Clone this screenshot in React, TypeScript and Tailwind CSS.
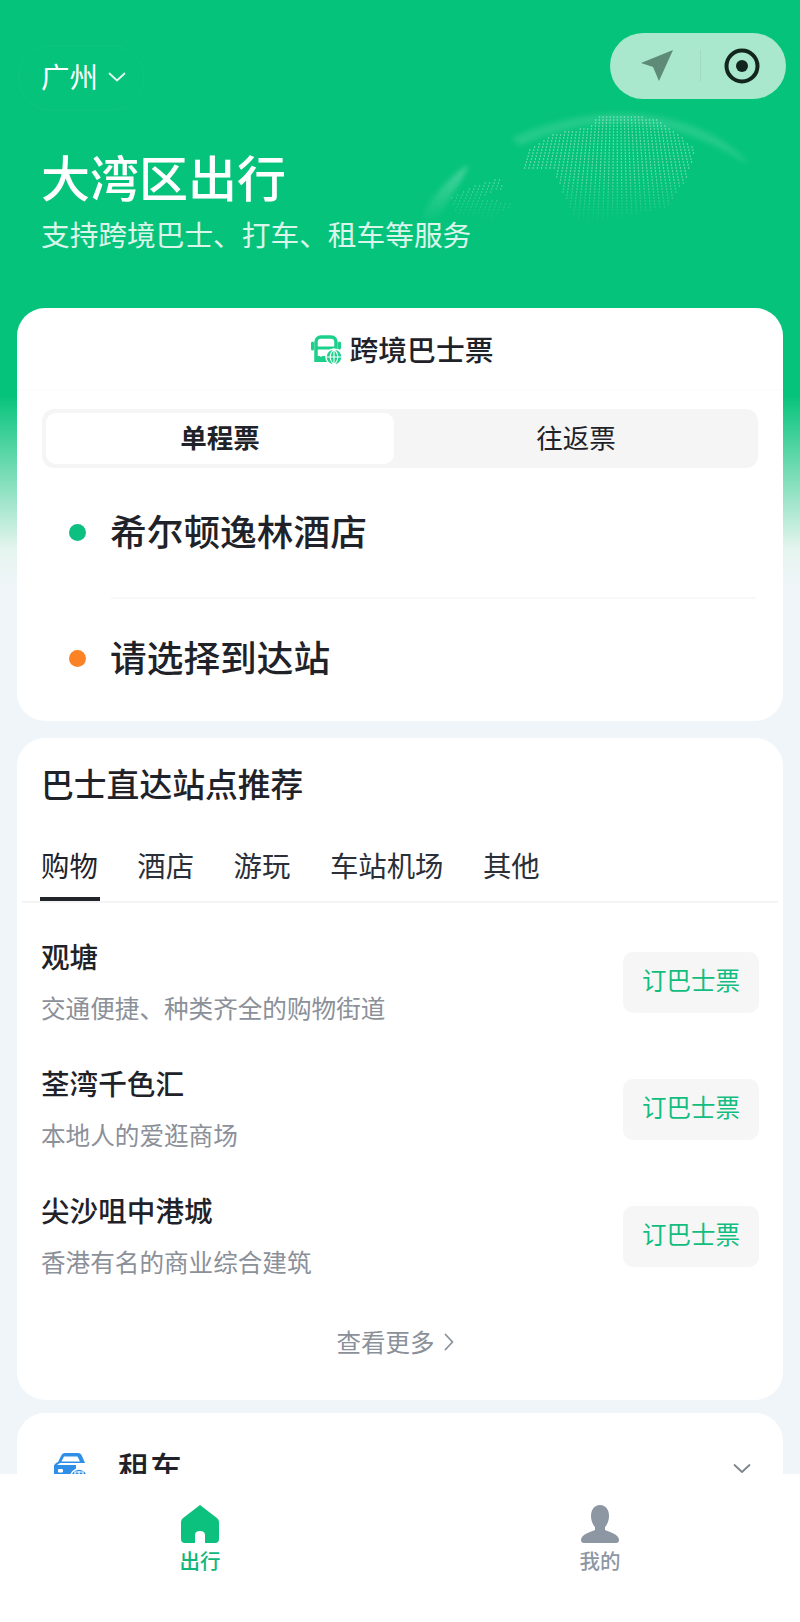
import React from "react";

const FONT = "font-['Noto_Sans_CJK_SC','Noto_Sans',sans-serif]";

type P = [number, number];
const LAND: P[][] = [
  [[380, 180], [450, 130], [560, 110], [600, 70], [760, 80], [885, 170], [860, 260], [800, 350], [620, 385], [525, 385], [480, 290], [460, 240], [360, 230]],
  [[150, 320], [200, 292], [300, 262], [312, 290], [240, 320], [340, 340], [260, 392], [170, 370]],
];

function inside(x: number, y: number, poly: P[]) {
  let c = false;
  for (let i = 0, j = poly.length - 1; i < poly.length; j = i++) {
    const [xi, yi] = poly[i];
    const [xj, yj] = poly[j];
    if (yi > y !== yj > y && x < ((xj - xi) * (y - yi)) / (yj - yi) + xi) c = !c;
  }
  return c;
}

function Globe() {
  const dots: { x: number; y: number; o: number }[] = [];
  for (let k = -60; k <= 30; k++) {
    for (let y = 60; y <= 400; y += 9) {
      const x = 650 + k * 13 * (0.8 + ((y - 60) / 300) * 0.3);
      if (!LAND.some((p) => inside(x, y, p))) continue;
      const o = y < 240 ? 0.36 : Math.max(0.05, 0.36 * (1 - (y - 240) / 160));
      dots.push({ x: 400 + x / 3, y: 90 + y / 3, o });
    }
  }
  return (
    <svg className="absolute left-[400px] top-[90px]" width="400" height="200" viewBox="400 90 400 200">
      <defs>
        <linearGradient id="rim" x1="0" y1="0" x2="0" y2="1">
          <stop offset="0" stopColor="#fff" stopOpacity="0.28" />
          <stop offset="1" stopColor="#fff" stopOpacity="0" />
        </linearGradient>
        <filter id="soft" x="-20%" y="-20%" width="140%" height="140%">
          <feGaussianBlur stdDeviation="2.500" />
        </filter>
      </defs>
      <path d="M468 165 C448 178 428 200 420 222 C428 226 436 222 444 208 C452 192 464 180 468 165 Z" fill="url(#rim)" filter="url(#soft)" />
      <path d="M512 138 C550 120 590 114 620 113 C680 114 725 135 750 165 C720 148 690 130 640 124 C600 120 560 128 520 146 Z" fill="#fff" fillOpacity="0.12" filter="url(#soft)" />
      {dots.map((d, i) => (
        <rect key={i} x={d.x} y={d.y} width="1.200" height="2" fill="#fff" fillOpacity={d.o} />
      ))}
    </svg>
  );
}

function Chevron({ className = "" }: { className?: string }) {
  return (
    <svg className={className} viewBox="0 0 18 10" fill="none" stroke="currentColor" strokeWidth="1.800" strokeLinecap="round" strokeLinejoin="round">
      <path d="M1.500 1.500 9 8.500l7.500-7" />
    </svg>
  );
}

function BusIcon() {
  return (
    <svg width="32" height="30" viewBox="0 0 32 30" fill="none">
      <path d="M5 27V7c0-3 2-5 5-5h10c3 0 5 2 5 5v7" stroke="#1ccf8a" strokeWidth="3.500" />
      <path d="M1.500 8v6M28.500 8v5" stroke="#1ccf8a" strokeWidth="3" strokeLinecap="round" />
      <path d="M5 13h20" stroke="#1ccf8a" strokeWidth="3" />
      <path d="M5 24h11" stroke="#1ccf8a" strokeWidth="6" />
      <circle cx="10" cy="20" r="1.800" fill="#fff" />
      <circle cx="23" cy="22" r="8" fill="#1ccf8a" stroke="#fff" strokeWidth="1.500" />
      <path d="M15.500 22h15M23 14.500v15M23 14.500c-5 4-5 11 0 15M23 14.500c5 4 5 11 0 15" stroke="#fff" strokeWidth="1.100" />
    </svg>
  );
}

function CarIcon() {
  return (
    <svg width="36" height="26" viewBox="0 0 36 26" fill="none">
      <path d="M1 14c0-3 2-4 4-5l3-6c1-2 2-3 4-3h13c2 0 3 1 4 3l3 7H7" fill="#2f8fe6" />
      <path d="M11 3.500h13.500l2.500 5H8.500z" fill="#fff" />
      <path d="M1 12h22v14H3c-1 0-2-1-2-2z" fill="#2f8fe6" />
      <rect x="5" y="16" width="5" height="3.500" rx="1" fill="#fff" />
      <path d="M17 26c0-6 4-10 9-10s9 4 9 10z" fill="#2f8fe6" stroke="#fff" strokeWidth="1.500" />
      <path d="M22 19h8v5h-8zM26 18v7" stroke="#fff" strokeWidth="1.200" />
    </svg>
  );
}

const tabs = ["购物", "酒店", "游玩", "车站机场", "其他"];
const items = [
  { t: "观塘", s: "交通便捷、种类齐全的购物街道" },
  { t: "荃湾千色汇", s: "本地人的爱逛商场" },
  { t: "尖沙咀中港城", s: "香港有名的商业综合建筑" },
];

export default function App() {
  return (
    <div className={`${FONT} relative h-[1622px] w-[800px] overflow-hidden bg-[linear-gradient(180deg,#05c37b_0,#05c37b_395px,#e6f5ef_550px,#f0f5f9_590px,#f0f5f9_100%)] text-[#1f2329]`}>
      <Globe />

      {/* Header */}
      <header className="relative h-[308px] px-[41px] text-white">
        <div className="absolute left-[18px] top-[45px] h-[66px] w-[126px] rounded-[33px] border border-white/[0.03]" />
        <div className="flex h-[152px] items-center gap-[10px]">
          <span className="text-[28.500px] leading-none">广州</span>
          <Chevron className="mt-[2px] h-[10px] w-[18px] text-white/90" />
        </div>
        <h1 className="mt-[-4px] text-[49px] font-medium leading-[56px]">大湾区出行</h1>
        <p className="mt-[10px] whitespace-nowrap text-[28.700px] leading-[40px] text-white/85">支持跨境巴士、打车、租车等服务</p>

        <div className="absolute left-[610px] top-[33px] flex h-[66px] w-[176px] items-center rounded-[33px] bg-[#a9e8cd]">
          <div className="flex w-[90px] justify-center pl-[4px]">
            <svg width="32" height="32" viewBox="0 0 32 32">
              <path d="M32 0 0 13l12 4 6 14z" fill="#5e8a78" />
            </svg>
          </div>
          <div className="h-[32px] w-px bg-black/[0.06]" />
          <div className="flex flex-1 justify-center pr-[4px]">
            <svg width="36" height="36" viewBox="0 0 36 36" fill="none">
              <circle cx="18" cy="18" r="15.500" stroke="#12261e" strokeWidth="4" />
              <circle cx="18" cy="18" r="6" fill="#12261e" />
            </svg>
          </div>
        </div>
      </header>

      {/* Main */}
      <main className="relative flex flex-col gap-[17px] px-[17px]">
        {/* Ticket card */}
        <section className="h-[413px] rounded-[28px] bg-white">
          <div className="flex h-[82px] items-center justify-center gap-[7px] border-b border-[#fbfbfb] pl-[4px] pt-[2px]">
            <BusIcon />
            <span className="text-[28.800px] font-medium leading-none">跨境巴士票</span>
          </div>
          <div className="mx-[25px] mt-[19px] flex h-[59px] rounded-[12px] bg-[#f5f5f5] p-[4px] pr-0">
            <div className="flex w-[348px] items-center justify-center rounded-[10px] bg-white pb-[3px] text-[26.500px] font-semibold">单程票</div>
            <div className="flex flex-1 items-center justify-center pb-[3px] text-[26.500px]">往返票</div>
          </div>
          <div className="mt-[33px] flex h-[62px] items-center pl-[52px]">
            <span className="h-[17px] w-[17px] rounded-full bg-[#0dbf80]" />
            <span className="mb-[4px] ml-[24px] text-[36.700px] font-medium leading-none">希尔顿逸林酒店</span>
          </div>
          <div className="ml-[94px] mr-[27px] mt-[34px] h-[2px] bg-[#f8f8f8]" />
          <div className="mt-[28px] flex h-[62px] items-center pl-[52px]">
            <span className="h-[17px] w-[17px] rounded-full bg-[#fb8325]" />
            <span className="mb-[4px] ml-[24px] text-[36.700px] font-medium leading-none">请选择到达站</span>
          </div>
        </section>

        {/* Recommendation card */}
        <section className="h-[662px] rounded-[28px] bg-white">
          <h2 className="pl-[24px] pt-[25px] text-[32.800px] font-medium leading-[40px]">巴士直达站点推荐</h2>
          <div className="mx-[5px] mt-[42px] flex h-[58px] gap-[39.500px] border-b-2 border-[#f4f4f4] pl-[19px]">
            {tabs.map((t, i) => (
              <div key={t} className={`relative h-[56px] text-[28.400px] leading-[40px] ${i === 0 ? "text-[#1f2329]" : "text-[#2b3038]"}`}>
                {t}
                {i === 0 && <span className="absolute -left-[1px] -right-[2px] bottom-0 h-[4px] bg-[#22252a]" />}
              </div>
            ))}
          </div>
          <ul className="mt-[35px] flex flex-col gap-[43px] pl-[24px] pr-[24px]">
            {items.map((it) => (
              <li key={it.t} className="flex h-[84px] items-center justify-between">
                <div>
                  <div className="text-[28.600px] font-medium leading-[36px]">{it.t}</div>
                  <div className="mt-[18px] text-[24.600px] leading-[30px] text-[#8b9099]">{it.s}</div>
                </div>
                <button className="mt-[4px] flex h-[61px] w-[136px] items-center justify-center rounded-[10px] bg-[#f6f6f6] pb-[4px] text-[24.500px] text-[#12bd80]">订巴士票</button>
              </li>
            ))}
          </ul>
          <div className="mt-[49px] flex items-center justify-center gap-[9px] pr-[10px] text-[24.500px] leading-[34px] text-[#8b9099]">
            <span>查看更多</span>
            <svg width="10" height="18" viewBox="0 0 10 18" fill="none" stroke="currentColor" strokeWidth="1.800" strokeLinecap="round" strokeLinejoin="round">
              <path d="M1.500 1.500 8.500 9l-7 7.500" />
            </svg>
          </div>
        </section>

        {/* Rental card */}
        <section className="mt-[-4px] h-[200px] rounded-[28px] bg-white">
          <div className="flex items-center pl-[36px] pr-[32px] pt-[33px]">
            <CarIcon />
            <span className="ml-[29px] text-[32px] font-medium leading-[40px]">租车</span>
            <Chevron className="ml-auto mt-[4px] h-[11px] w-[18px] text-[#7e858f]" />
          </div>
        </section>
      </main>

      {/* Tab bar */}
      <nav className="absolute bottom-0 left-0 right-0 flex h-[148px] bg-white pt-[31px]">
        <div className="flex w-[400px] flex-col items-center">
          <svg width="38" height="38" viewBox="0 0 38 38">
            <path d="M19 0 36.500 13.500Q38 15 38 17V34Q38 38 34 38H24V30Q24 26 19 26T14 30V38H4Q0 38 0 34V17Q0 15 1.500 13.500Z" fill="#0cc07e" />
          </svg>
          <span className="mt-[4px] text-[20.500px] font-medium leading-[26px] text-[#12b67a]">出行</span>
        </div>
        <div className="flex w-[400px] flex-col items-center">
          <svg width="38" height="38" viewBox="0 0 38 38">
            <path d="M19 0c6 0 9 5 9 11 0 5-2 9-4 11v3c4 2 14 4 14 10 0 2-1 3-3 3H3c-2 0-3-1-3-3 0-6 10-8 14-10v-3c-2-2-4-6-4-11C10 5 13 0 19 0Z" fill="#8d96a3" />
          </svg>
          <span className="mt-[4px] text-[20.500px] font-medium leading-[26px] text-[#8d96a3]">我的</span>
        </div>
      </nav>
    </div>
  );
}
